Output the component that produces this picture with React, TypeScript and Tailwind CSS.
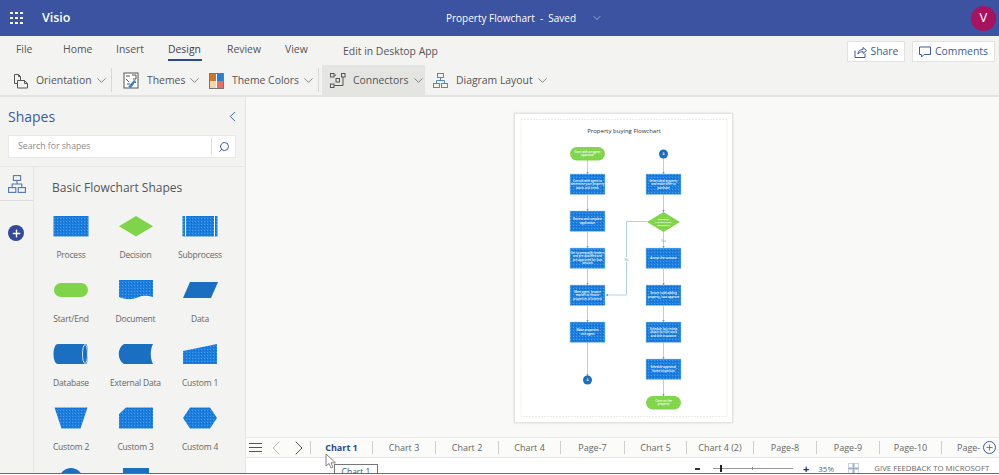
import React from "react";
import { ChevronDown, ChevronLeft, ChevronRight, Search, Plus } from "lucide-react";

const Chev = () => <ChevronDown className="w-[15px] h-[15px] shrink-0 text-[#555] ml-[2px]" strokeWidth={1.1} />;

function OrientationIcon() {
  return (
    <svg className="shrink-0" width="16" height="16" viewBox="0 0 16 16" fill="none" stroke="#555" strokeWidth="1">
      <path d="M1.500 1.500h4l2 2v7h-6z" />
      <path d="M5.500 1.500v2h2" />
      <path d="M4.500 7.500h7l3 3v4.500h-10z" fill="#f3f3f2" />
      <path d="M11.500 7.500v3h3" />
    </svg>
  );
}
function ThemesIcon() {
  return (
    <svg className="shrink-0" width="16" height="17" viewBox="0 0 16 17" fill="none">
      <rect x="1" y="1" width="14" height="15" fill="#fff" stroke="#555" />
      <path d="M3 4h4M3 7l3 3M9 3h4v4h-3M4 12h3M11 9l2 2" stroke="#555" />
      <path d="M5 15l6-7 2 1-5 7z" fill="#3f7fc4" />
    </svg>
  );
}
function ThemeColorsIcon() {
  return (
    <svg className="shrink-0" width="15" height="16" viewBox="0 0 15 16">
      <rect x="0.500" y="0.500" width="14" height="15" fill="#fff" stroke="#777" />
      <rect x="1" y="1" width="6" height="7" fill="#c9772d" />
      <rect x="8" y="1" width="6" height="7" fill="#2b7fcf" />
      <rect x="1" y="8" width="6" height="7" fill="#f0d8a8" />
      <rect x="8" y="8" width="6" height="7" fill="#ee6b64" />
    </svg>
  );
}
function ConnectorsIcon() {
  return (
    <svg className="shrink-0" width="16" height="15" viewBox="0 0 16 15" fill="none" stroke="#555">
      <rect x="0.500" y="0.500" width="3.500" height="3.500" />
      <rect x="11.500" y="0.500" width="3.500" height="3.500" />
      <rect x="0.500" y="11" width="3.500" height="3.500" />
      <rect x="6" y="5.500" width="3.500" height="3.500" />
      <path d="M4 2.200h2M13 4v8.500H4" />
    </svg>
  );
}
function DiagramIcon({ size = 15, color = "#3f7fc4" }: { size?: number; color?: string }) {
  return (
    <svg className="shrink-0" width={size} height={size} viewBox="0 0 15 15" fill="none" stroke={color} strokeWidth="0.900">
      <rect x="4.500" y="0.500" width="6" height="4" />
      <rect x="0.500" y="10.500" width="6" height="4" />
      <rect x="8.500" y="10.500" width="6" height="4" />
      <path d="M7.500 4.500v3M3.500 10.500v-3h8v3" />
    </svg>
  );
}
function ShareIcon() {
  return (
    <svg className="shrink-0" width="13" height="13" viewBox="0 0 13 13" fill="none" stroke="#3b5a9e">
      <path d="M1 5.500v7h10v-4" />
      <path d="M4 9c0-3 2-4.500 5-4.500V2.500l3.500 3-3.500 3V6.500c-2 0-3.500 1-5 2.500z" />
    </svg>
  );
}
function CommentIcon() {
  return (
    <svg className="shrink-0" width="12" height="12" viewBox="0 0 12 12" fill="none" stroke="#3b5a9e">
      <path d="M.5 1h11v7.500H5L2.500 11V8.500h-2z" />
    </svg>
  );
}

function ToolItem({ icon, label, className }: { icon: React.ReactNode; label: string; className: string }) {
  return (
    <div className={"flex items-center h-full shrink-0 pt-[1px] " + className}>
      {icon}
      <span className="flex items-center">
        <span className="text-[10.400px] text-[#555] whitespace-nowrap">{label}</span>
        <Chev />
      </span>
    </div>
  );
}

const boxes: { x: number; y: number; lines: string[] }[] = [
  { x: 570, y: 174, lines: ["Consult with agent to", "determine your property", "wants and needs"] },
  { x: 570, y: 211, lines: ["Review and complete", "application"] },
  { x: 570, y: 248, lines: ["Get to prequalify lenders", "and pre-qualified and", "pre-approved for loan", "amount"] },
  { x: 570, y: 285, lines: ["Meet agent, browse", "market to choose", "properties of interest"] },
  { x: 570, y: 322, lines: ["Make properties", "visit agent"] },
  { x: 646, y: 174, lines: ["Select ideal property", "and make offer to", "purchase"] },
  { x: 646, y: 248, lines: ["Accept the contract"] },
  { x: 646, y: 285, lines: ["Secure code-adding", "property, loan approve"] },
  { x: 646, y: 322, lines: ["Schedule last review", "obtain for title work", "and title insurance"] },
  { x: 646, y: 359, lines: ["Schedule appraisal,", "home inspection"] },
];

function Lines({ cx, cy, lines, fs = 2.800 }: { cx: number; cy: number; lines: string[]; fs?: number }) {
  const start = cy - ((lines.length - 1) * (fs + 0.6)) / 2 + fs * 0.35;
  return (
    <text fontSize={fs} fill="#fff" fontWeight="600" textAnchor="middle" fontFamily="Open Sans, sans-serif">
      {lines.map((l, i) => (
        <tspan key={i} x={cx} y={start + i * (fs + 0.6)}>
          {l}
        </tspan>
      ))}
    </text>
  );
}

function Flowchart() {
  const line = "#a9cbe8";
  const v = (x: number, y1: number, y2: number) => (
    <g key={x + "-" + y1}>
      <path d={`M${x} ${y1}V${y2}`} stroke={line} strokeWidth="0.900" />
      <path d={`M${x - 1.2} ${y2 - 1.8}h2.400l-1.200 1.800z`} fill="#4d8cc8" />
    </g>
  );
  return (
    <svg width="219" height="310" viewBox="514 113 219 310" className="block">
      <defs>
        <pattern id="dither" width="3" height="3" patternUnits="userSpaceOnUse">
          <rect width="3" height="3" fill="#1a7fe0" />
          <rect x="0" y="0" width="1" height="1" fill="#4a9bea" />
          <rect x="2" y="1" width="1" height="1" fill="#1568bd" />
        </pattern>
        <pattern id="ditherg" width="3" height="3" patternUnits="userSpaceOnUse">
          <rect width="3" height="3" fill="#7fd44a" />
          <rect x="1" y="1" width="1" height="1" fill="#92dc62" />
        </pattern>
      </defs>
      <rect x="521" y="119.500" width="206" height="297" fill="#fff" stroke="#ecece9" strokeWidth="1" strokeDasharray="2 1" />
      <text x="624" y="133" fontSize="6" fontWeight="500" textAnchor="middle" fill="#333" fontFamily="Open Sans, sans-serif">
        Property buying Flowchart
      </text>
      {v(587.5, 160, 174)}
      {v(587.5, 195, 211)}
      {v(587.5, 232, 248)}
      {v(587.5, 269, 285)}
      {v(587.5, 306, 322)}
      {v(587.5, 342, 376)}
      {v(663.5, 158, 174)}
      {v(663.5, 195, 212)}
      {v(663.5, 232, 248)}
      {v(663.5, 269, 285)}
      {v(663.5, 306, 322)}
      {v(663.5, 342, 359)}
      {v(663.5, 379, 396)}
      <path d="M647 221.500H626.500V295H606" fill="none" stroke={line} strokeWidth="0.900" />
      <path d="M606 295l1.800-1.200v2.400z" fill="#4d8cc8" />
      <rect x="623" y="257" width="7" height="5" fill="#fff" />
      <text x="626.500" y="260.500" fontSize="3" textAnchor="middle" fill="#5a7" fontFamily="Open Sans, sans-serif">No</text>
      <text x="663.500" y="241.500" fontSize="3" textAnchor="middle" fill="#5a7" fontFamily="Open Sans, sans-serif">Yes</text>
      <rect x="570" y="147" width="35" height="13.500" rx="6.700" fill="url(#ditherg)" />
      <Lines cx={587.5} cy={153.7} lines={["Start with an agent", "appraisal"]} />
      <circle cx="663.500" cy="154" r="4.500" fill="#1a6fc0" />
      <text x="663.500" y="155.200" fontSize="3.200" textAnchor="middle" fill="#fff">A</text>
      <circle cx="587.500" cy="380" r="4.500" fill="#1a6fc0" />
      <text x="587.500" y="381.200" fontSize="3.200" textAnchor="middle" fill="#fff">A</text>
      {boxes.map((b) => (
        <g key={b.x + "-" + b.y}>
          <rect x={b.x} y={b.y} width="35" height="20.500" fill="url(#dither)" stroke="#a8d0f0" strokeWidth="0.500" />
          <Lines cx={b.x + 17.5} cy={b.y + 10.2} lines={b.lines} />
        </g>
      ))}
      <path d="M663.500 212l16.500 10-16.500 10-16.500-10z" fill="url(#ditherg)" />
      <Lines cx={663.5} cy={222} lines={["Negotiate", "Accepted offer", "approval of"]} fs={2.4} />
      <rect x="646" y="396" width="35" height="13.500" rx="6.700" fill="url(#ditherg)" />
      <Lines cx={663.5} cy={402.7} lines={["Close on the", "property"]} />
    </svg>
  );
}

type Sh = { name: string; s: React.ReactNode };
const B = "url(#dither)";
const D = "#1a6fc0";
const shapes: Sh[] = [
  { name: "Process", s: <rect x="2.500" y="4" width="35" height="20.500" fill={B} /> },
  { name: "Decision", s: <path d="M20 4l17 10.200L20 24.500 3 14.200z" fill="#7fd44a" /> },
  {
    name: "Subprocess",
    s: (
      <>
        <rect x="2.500" y="4" width="35" height="20.500" fill={B} />
        <path d="M5.500 4v20.500M34.500 4v20.500" stroke="#f3f3f2" strokeWidth="1" />
      </>
    ),
  },
  { name: "Start/End", s: <rect x="3" y="7" width="34" height="14" rx="7" fill="#7fd44a" /> },
  { name: "Document", s: <path d="M3 4h34v17c-5-1-9-2-14 0s-12 3.500-20 0z" fill={B} /> },
  { name: "Data", s: <path d="M10 6h28l-7 16H3z" fill={D} /> },
  {
    name: "Database",
    s: (
      <>
        <path d="M7 4h28c2.500 0 2.500 20 0 20H7C1 24 1 4 7 4z" fill={D} />
        <ellipse cx="34" cy="14" rx="2.500" ry="9.500" fill="none" stroke="#cfe2f3" strokeWidth="1" />
      </>
    ),
  },
  { name: "External Data", s: <path d="M8 4h29c-3 6-3 14 0 20H8C1 20 1 8 8 4z" fill={D} /> },
  { name: "Custom 1", s: <path d="M3 11l34-7v20H3z" fill={B} /> },
  { name: "Custom 2", s: <path d="M3.500 3.500h33l-7 21h-19z" fill={B} /> },
  { name: "Custom 3", s: <path d="M10 3.500h27v21H3V10z" fill={B} /> },
  { name: "Custom 4", s: <path d="M10 3.500h20l7 10.500-7 10.500H10L3 14z" fill={B} /> },
  { name: "", s: <circle cx="20" cy="12" r="12" fill={D} /> },
  { name: "", s: <rect x="7" y="0" width="26" height="28" fill={D} /> },
];

const tabs: { t: string; w: string }[] = [
  { t: "Chart 1", w: "w-[62px] font-bold text-[#2b4a96]" },
  { t: "Chart 3", w: "w-[63px] text-[#666]" },
  { t: "Chart 2", w: "w-[63px] text-[#666]" },
  { t: "Chart 4", w: "w-[62px] text-[#666]" },
  { t: "Page-7", w: "w-[64px] text-[#666]" },
  { t: "Chart 5", w: "w-[62px] text-[#666]" },
  { t: "Chart 4 (2)", w: "w-[67px] text-[#666]" },
  { t: "Page-8", w: "w-[63px] text-[#666]" },
  { t: "Page-9", w: "w-[63px] text-[#666]" },
  { t: "Page-10", w: "w-[62px] text-[#666]" },
];

export default function App() {
  return (
    <div className="relative w-[999px] h-[475px] overflow-hidden flex flex-col bg-[#f9f9f7] font-['Open_Sans',sans-serif]">
      {/* Title bar */}
      <header className="h-[36px] shrink-0 bg-[#3b53a0] flex items-center relative text-white">
        <div className="ml-[10px] grid grid-cols-3 gap-[2.500px] w-[13px]">
          {Array.from({ length: 9 }).map((_, i) => (
            <span key={i} className="w-[2.500px] h-[2.500px] bg-white" />
          ))}
        </div>
        <span className="ml-[19px] w-[29px] text-[12.500px] font-semibold">Visio</span>
        <span className="ml-[375px] text-[10px] font-medium whitespace-nowrap w-[127px]">Property Flowchart&nbsp; -&nbsp; Saved</span>
        <ChevronDown className="ml-[18px] w-[12px] h-[12px] text-[#cdd4ea]" strokeWidth={1.3} />
        <div className="ml-auto mr-[3px] w-[25px] h-[25px] rounded-full bg-[#a8125f] flex items-center justify-center text-[13px]">V</div>
      </header>

      {/* Ribbon */}
      <div className="shrink-0 bg-[#f3f3f2] h-[61px] flex flex-col border-b-2 border-[#e3e3e1]">
        <div className="h-[29px] flex items-start text-[10.400px] text-[#555] relative pl-[16px]">
          <span className="w-[47px] mt-[6px]">File</span>
          <span className="w-[53px] mt-[6px]">Home</span>
          <span className="w-[52px] mt-[6px]">Insert</span>
          <span className="w-[59px] mt-[6px]">
            <span className="block w-[34px] h-[19px] text-[#444] border-b-2 border-[#2b4a96]">Design</span>
          </span>
          <span className="w-[58px] mt-[6px]">Review</span>
          <span className="w-[58px] mt-[6px]">View</span>
          <span className="mt-[8px]">Edit in Desktop App</span>
          <div className="ml-auto mr-[4px] mt-[5px] flex gap-[7px]">
            <div className="w-[58px] h-[21px] bg-white border border-[#e2e2e2] flex items-center justify-center gap-[4px] text-[#3b5a9e] font-medium text-[10.400px]">
              <ShareIcon />
              Share
            </div>
            <div className="w-[83px] h-[21px] bg-white border border-[#e2e2e2] flex items-center justify-center gap-[4px] text-[#3b5a9e] font-medium text-[10.400px]">
              <CommentIcon />
              Comments
            </div>
          </div>
        </div>
        <div className="h-[30px] flex items-center">
          <ToolItem className="pl-[13px] gap-[7px] w-[111px]" icon={<OrientationIcon />} label="Orientation" />
          <div className="w-px h-[24px] bg-[#d8d8d6]" />
          <ToolItem className="pl-[11px] gap-[8px] w-[86px]" icon={<ThemesIcon />} label="Themes" />
          <ToolItem className="pl-[11px] gap-[8px] w-[120px]" icon={<ThemeColorsIcon />} label="Theme Colors" />
          <div className="w-px h-[24px] bg-[#d8d8d6] mr-[3px]" />
          <ToolItem className="pl-[8px] gap-[7px] w-[103px] bg-[#e4e4e1]" icon={<ConnectorsIcon />} label="Connectors" />
          <ToolItem className="pl-[8px] gap-[8px]" icon={<DiagramIcon />} label="Diagram Layout" />
        </div>
      </div>

      {/* Main */}
      <div className="flex-1 min-h-0 flex">
        <aside className="w-[246px] shrink-0 bg-[#f3f3f2] border-r border-[#e6e6e4] flex flex-col overflow-hidden">
          <div className="h-[27px] mt-[6px] flex items-center justify-between pl-[8px] pr-[4px]">
            <span className="text-[14px] text-[#3b5a9e]">Shapes</span>
            <ChevronLeft className="w-[17px] h-[17px] text-[#3b5a9e]" strokeWidth={1.4} />
          </div>
          <div className="mx-[8px] mt-[5px] h-[23px] w-[228px] bg-white border border-[#e8e8e8] flex items-center">
            <span className="flex-1 pl-[9px] text-[8.700px] text-[#8a8a8a]">Search for shapes</span>
            <span className="w-px h-[17px] bg-[#dcdcdc]" />
            <Search className="w-[12px] h-[12px] ml-[6px] mr-[5px] text-[#2b4a96] -scale-x-100" strokeWidth={1.8} />
          </div>
          <div className="mt-[8px] flex-1 min-h-0 flex border-t border-[#e8e8e6]">
            <div className="w-[34px] shrink-0 border-r border-[#e6e6e4] flex flex-col">
              <div className="h-[34px] shrink-0 border-b border-[#dcdcda] flex items-center justify-center">
                <DiagramIcon size={18} color="#4f73b8" />
              </div>
              <div className="mt-[24px] ml-[8px] w-[16px] h-[16px] rounded-full bg-[#34499a] flex items-center justify-center">
                <Plus className="w-[11px] h-[11px] text-white" strokeWidth={3} />
              </div>
            </div>
            <div className="flex-1 min-w-0 pl-[5px]">
              <div className="ml-[13px] mt-[12px] h-[18px] text-[12px] text-[#555] leading-[18px] whitespace-nowrap">Basic Flowchart Shapes</div>
              <div className="mt-[15px] grid grid-cols-[64px_65px_64px] auto-rows-[64px]">
                {shapes.map((x, i) => (
                  <div key={i} className="flex flex-col items-center">
                    <svg className="shrink-0" width="40" height="28" viewBox="0 0 40 28">{x.s}</svg>
                    <span className="mt-[8px] text-[8.500px] tracking-[-0.2px] leading-[14px] text-[#666] whitespace-nowrap">{x.name}</span>
                  </div>
                ))}
              </div>
            </div>
          </div>
        </aside>

        <div className="flex-1 min-w-0 flex flex-col">
          <div className="flex-1 min-h-0 pl-[268px] pt-[16px]">
            <div className="w-[219px] h-[310px] bg-white border border-[#e4e4e2] shadow-[0_0_2px_rgba(0,0,0,0.15)]">
              <div className="-m-px">
                <Flowchart />
              </div>
            </div>
          </div>
          <div className="h-[21px] shrink-0 bg-[#fbfbfa] border-t border-[#ececea] border-b border-b-[#e6e6e4] flex items-center">
            <div className="w-[64px] shrink-0 flex items-center pl-[3px]">
              <div className="w-[13px] shrink-0 flex flex-col gap-[3px]">
                <span className="h-px bg-[#555]" />
                <span className="h-px bg-[#555]" />
                <span className="h-px bg-[#555]" />
              </div>
              <ChevronLeft className="ml-[1.500px] w-[24px] h-[24px] shrink-0 text-[#bbb]" strokeWidth={1} />
              <ChevronRight className="-ml-[1px] w-[24px] h-[24px] shrink-0 text-[#555]" strokeWidth={1} />
            </div>
            {tabs.map((t) => (
              <div key={t.t} className={"h-[13px] shrink-0 border-l border-[#cfcfcf] flex items-center justify-center text-[9px] whitespace-nowrap " + t.w}>
                {t.t}
              </div>
            ))}
            <div className="h-[13px] shrink-0 border-l border-[#cfcfcf] pl-[15px] text-[9px] leading-[13px] text-[#666]">Page-</div>
            <div className="ml-[3px] w-[13px] h-[13px] shrink-0 rounded-full border border-[#3b5a9e] flex items-center justify-center">
              <Plus className="w-[9px] h-[9px] text-[#3b5a9e]" strokeWidth={2} />
            </div>
          </div>
          <div className="h-[15px] shrink-0 bg-white flex items-center text-[#666] pt-[6px]">
            <span className="ml-[449px] w-[5px] h-[2px] bg-[#333]" />
            <span className="relative ml-[13px] w-[80px] h-px bg-[#999]">
              <span className="absolute left-[7px] -top-[3px] w-[2px] h-[7px] bg-[#222]" />
              <span className="absolute left-[39px] -top-[1px] w-px h-[3px] bg-[#888]" />
            </span>
            <span className="ml-[10px] text-[11px] leading-none font-bold text-[#333]">+</span>
            <span className="ml-[9px] w-[17px] text-[8px] whitespace-nowrap">35%</span>
            <svg className="ml-[13px] shrink-0" width="11" height="11" viewBox="0 0 11 11">
              <rect width="11" height="11" fill="#c9d3e4" />
              <path d="M1 1h3v3H1zM7 1h3v3H7zM1 7h3v3H1zM7 7h3v3H7z" fill="#fff" />
              <path d="M5.500 0v11M0 5.500h11" stroke="#8a9ab5" strokeWidth=".6" />
            </svg>
            <span className="ml-[15px] text-[7.800px] whitespace-nowrap">GIVE FEEDBACK TO MICROSOFT</span>
          </div>
        </div>
      </div>
      <div className="h-[2px] shrink-0 bg-[#6b6b6b] border-b border-b-white" />

      {/* Tooltip + cursor */}
      <div className="absolute left-[334px] top-[464px] w-[44px] h-[9px] overflow-hidden bg-white border border-b-0 border-[#777] text-center text-[8.500px] text-[#555] leading-[14px]">Chart 1</div>
      <svg className="absolute left-[325px] top-[453px]" width="12" height="16" viewBox="0 0 12 16">
        <path d="M1 1v12l3-2.500 2 4.500 2-1-2-4.200h4.500z" fill="#fff" stroke="#666" strokeWidth=".8" />
      </svg>
    </div>
  );
}
